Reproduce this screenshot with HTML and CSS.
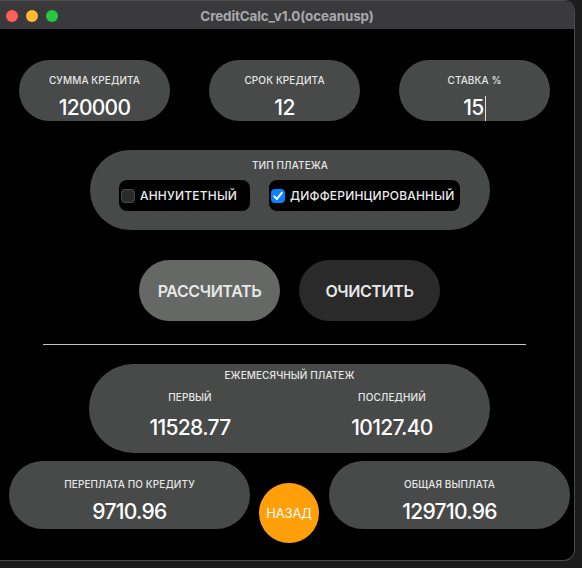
FILE: index.html
```html
<!DOCTYPE html>
<html lang="ru">
<head>
<meta charset="utf-8">
<title>CreditCalc_v1.0(oceanusp)</title>
<link rel="stylesheet" href="styles.css">
</head>
<body>
<div class="window">
  <div class="titlebar">
    <div class="lights">
      <span class="light red"></span>
      <span class="light yellow"></span>
      <span class="light green"></span>
    </div>
    <div class="title">CreditCalc_v1.0(oceanusp)</div>
  </div>
  <div class="content">
    <div class="inputs">
      <div class="pill field">
        <div class="label">СУММА КРЕДИТА</div>
        <div class="value">120000</div>
      </div>
      <div class="pill field">
        <div class="label">СРОК КРЕДИТА</div>
        <div class="value">12</div>
      </div>
      <div class="pill field">
        <div class="label">СТАВКА %</div>
        <div class="value">15<span class="caret"></span></div>
      </div>
    </div>

    <div class="pill group">
      <div class="label">ТИП ПЛАТЕЖА</div>
      <div class="options">
        <div class="option opt-a">
          <span class="box"></span>
          <span class="opt-text">АННУИТЕТНЫЙ</span>
        </div>
        <div class="option opt-b">
          <span class="box checked">
            <svg width="14" height="14" viewBox="0 0 14 14"><path d="M3.3 7.4 L5.9 10 L10.8 3.8" fill="none" stroke="#fff" stroke-width="2" stroke-linecap="round" stroke-linejoin="round"/></svg>
          </span>
          <span class="opt-text">ДИФФЕРИНЦИРОВАННЫЙ</span>
        </div>
      </div>
    </div>

    <div class="buttons">
      <div class="btn btn-calc">РАССЧИТАТЬ</div>
      <div class="btn btn-clear">ОЧИСТИТЬ</div>
    </div>

    <div class="divider"></div>

    <div class="pill monthly">
      <div class="label">ЕЖЕМЕСЯЧНЫЙ ПЛАТЕЖ</div>
      <div class="cols">
        <div class="col">
          <div class="label small">ПЕРВЫЙ</div>
          <div class="value">11528.77</div>
        </div>
        <div class="col">
          <div class="label small">ПОСЛЕДНИЙ</div>
          <div class="value">10127.40</div>
        </div>
      </div>
    </div>

    <div class="bottom">
      <div class="pill result">
        <div class="label">ПЕРЕПЛАТА ПО КРЕДИТУ</div>
        <div class="value">9710.96</div>
      </div>
      <div class="back">НАЗАД</div>
      <div class="pill result">
        <div class="label">ОБЩАЯ ВЫПЛАТА</div>
        <div class="value">129710.96</div>
      </div>
    </div>
  </div>
</div>
</body>
</html>
```

FILE: styles.css
```css
* { box-sizing: border-box; }
html, body {
  margin: 0;
  padding: 0;
  background: #1c1c1c;
  width: 582px;
  height: 568px;
  overflow: hidden;
  font-family: Inter, "Noto Sans", sans-serif;
}
.window {
  width: 575px;
  height: 561px;
  background: #000;
  border: 1px solid #4a4a4a;
  border-left: none;
  border-radius: 0 11px 11px 0;
  overflow: hidden;
  display: flex;
  flex-direction: column;
}
.titlebar {
  height: 28px;
  flex: none;
  background: #3a3a3c;
  position: relative;
  display: flex;
  align-items: center;
  justify-content: center;
}
.lights {
  position: absolute;
  left: 6px;
  top: 9px;
  display: flex;
  gap: 8px;
}
.light {
  width: 12px;
  height: 12px;
  border-radius: 50%;
}
.red { background: #fe5f57; }
.yellow { background: #febc2e; }
.green { background: #28c840; }
.title {
  color: #a9a9ab;
  font-size: 13.4px;
  font-weight: 700;
  letter-spacing: -0.1px;
  padding-top: 1px;
}
.content {
  display: flex;
  flex-direction: column;
  color: #fff;
}
.pill {
  background: #484a49;
  border-radius: 999px;
}
.label {
  font-size: 10px;
  font-weight: 500;
  color: #e6e6e6;
  line-height: 14px;
  text-align: center;
  letter-spacing: 0.1px;
}
.value {
  font-size: 21px;
  font-weight: 500;
  color: #fff;
  line-height: 24px;
  text-align: center;
  letter-spacing: -0.7px;
}
.inputs {
  display: flex;
  gap: 39px;
  padding-left: 19px;
  margin-top: 31px;
}
.field {
  width: 151px;
  height: 61px;
  padding-top: 13px;
}
.field .value {
  margin-top: 9px;
  position: relative;
}
.caret {
  display: inline-block;
  width: 1px;
  height: 25px;
  background: #ddd;
  vertical-align: -6px;
  margin-left: 1px;
}
.group {
  margin: 29px 0 0 90px;
  width: 400px;
  height: 80px;
  padding-top: 8px;
}
.options {
  display: flex;
  gap: 19px;
  margin: 8px 0 0 29px;
}
.option {
  height: 31px;
  background: #000;
  border-radius: 8px;
  display: flex;
  align-items: center;
  padding-left: 2px;
  gap: 5px;
}
.opt-a { width: 131px; }
.opt-b { width: 191px; }
.box {
  width: 14px;
  height: 14px;
  border-radius: 3.5px;
  background: #2b2b2b;
  border: 1px solid #4a4a4a;
  display: flex;
}
.box.checked {
  background: #0a82ff;
  border-color: #0a82ff;
}
.box.checked svg { margin: -1px; }
.opt-text {
  font-size: 12px;
  font-weight: 500;
  color: #ececec;
  letter-spacing: 0.2px;
}
.buttons {
  display: flex;
  gap: 19px;
  margin: 30px 0 0 139px;
}
.btn {
  width: 141px;
  height: 61px;
  border-radius: 999px;
  display: flex;
  align-items: center;
  justify-content: center;
  font-size: 16px;
  font-weight: 600;
  color: #e8e8e8;
  letter-spacing: -0.4px;
}
.btn-calc { background: #666866; }
.btn-clear { background: #2a2a2a; }
.divider {
  margin: 23px 0 0 43px;
  width: 483px;
  height: 1px;
  background: #c4c4c4;
}
.monthly {
  margin: 19px 0 0 89px;
  width: 401px;
  height: 89px;
  padding-top: 4px;
}
.cols {
  display: grid;
  grid-template-columns: 160px 160px;
  gap: 42px;
  padding-left: 21px;
  margin-top: 8px;
}
.col .value { margin-top: 12px; }
.bottom {
  display: flex;
  align-items: flex-start;
  margin: 8px 0 0 9px;
}
.result {
  width: 241px;
  height: 68px;
  padding-top: 16px;
}
.result .value { margin-top: 9px; }
.back {
  width: 60px;
  height: 60px;
  border-radius: 50%;
  background: #ff9f0a;
  color: #fff;
  font-size: 13px;
  font-weight: 400;
  display: flex;
  align-items: center;
  justify-content: center;
  margin: 22px 10px 0 9px;
  letter-spacing: -0.2px;
}
```
